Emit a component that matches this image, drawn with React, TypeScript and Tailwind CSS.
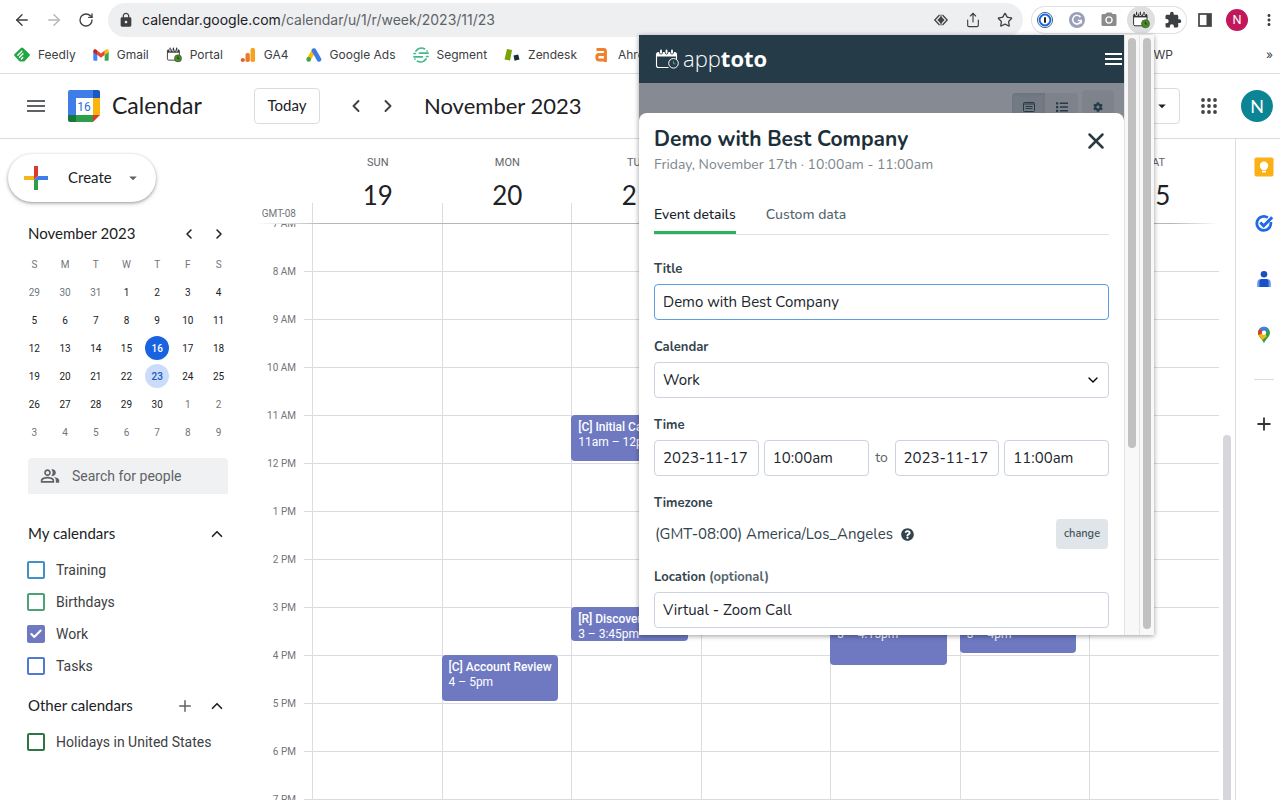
import React, { useState } from "react";
import {
  ArrowLeft,
  ArrowRight,
  Check,
  ChevronDown,
  ChevronLeft,
  ChevronRight,
  ChevronUp,
  Plus,
  RotateCw,
  Share,
  Star,
  X,
} from "lucide-react";
import { FaCog, FaList, FaQuestionCircle } from "react-icons/fa";
import {
  MdArrowDropDown,
  MdCameraAlt,
  MdExtension,
  MdLock,
  MdMenu,
  MdMoreVert,
  MdOutlinePeopleAlt,
} from "react-icons/md";

/* ---------- Icons ---------- */

function FeedlyIcon() {
  return (
    <svg viewBox="0 0 16 16" className="size-4">
      <path d="M6.900 1a1.600 1.600 0 0 1 2.200 0l6.300 6.100a1.400 1.400 0 0 1 0 2L10.800 14a2 2 0 0 1-1.400.6H6.600a2 2 0 0 1-1.400-.6L.600 9.100a1.400 1.400 0 0 1 0-2z" fill="#23a544" />
      <path d="M3.800 8.300 7.800 4.300M5.500 10.300 9 6.800M7.300 12l1.500-1.500" stroke="#fff" strokeWidth="1.300" strokeLinecap="round" />
    </svg>
  );
}

function GmailIcon() {
  return (
    <svg viewBox="0 0 16 16" className="size-4">
      <path d="M.3 4.500 4.300 7.200v6.600H1.500A1.200 1.200 0 0 1 .3 12.600z" fill="#4285f4" />
      <path d="M15.700 4.500 11.700 7.200v6.600h2.800a1.200 1.200 0 0 0 1.200-1.200z" fill="#34a853" />
      <path d="M4.200 3.500 8 6.400l3.800-2.900v4.300L8 10.800 4.200 7.800z" fill="#ea4335" />
      <path d="M11.700 3.500 13 2.600c1.200-.8 2.700-.1 2.700 1.200v1.400L11.700 8z" fill="#fbbc04" />
      <path d="M4.300 3.500 3 2.600C1.800 1.800.3 2.500.3 3.800v1.400L4.300 8z" fill="#c5221f" />
    </svg>
  );
}

function CalendarClockIcon() {
  return (
    <svg viewBox="0 0 18 18" className="size-[18px]">
      <rect x="1.600" y="3.200" width="13.400" height="11.600" rx="1.500" fill="#fff" stroke="#333" strokeWidth="1" />
      <path d="M1.600 3.200h13.400v3.200H1.600z" fill="#333" />
      <path d="M4.600 1.200v2.400M8.300 1.200v2.400M12 1.200v2.400" stroke="#fff" strokeWidth="2.800" strokeLinecap="round" />
      <path d="M4.600 1.200v2.400M8.300 1.200v2.400M12 1.200v2.400" stroke="#333" strokeWidth="1.400" strokeLinecap="round" />
      <circle cx="13.500" cy="12.800" r="4" fill="#4b8a2a" stroke="#355c20" strokeWidth=".7" />
      <path d="M13.300 10.600V13h1.800" stroke="#23361a" strokeWidth="1" fill="none" />
    </svg>
  );
}

function AnalyticsIcon() {
  return (
    <svg viewBox="0 0 16 16" className="size-4">
      <rect x="10.500" y="1" width="4.500" height="14" rx="1.700" fill="#f9a11b" />
      <rect x="5.500" y="6" width="4.300" height="9" rx="1.700" fill="#e9792b" />
      <circle cx="2.800" cy="13" r="2.100" fill="#e2602c" />
    </svg>
  );
}

function AdsIcon() {
  return (
    <svg viewBox="0 0 16 16" className="size-4">
      <path d="M7.800 3.600 2.800 12.200" stroke="#fbbc04" strokeWidth="4.200" strokeLinecap="round" />
      <path d="m8 3.600 5 8.800" stroke="#3f7be6" strokeWidth="4.600" strokeLinecap="round" />
      <circle cx="2.700" cy="12.400" r="2.300" fill="#34a853" />
    </svg>
  );
}

function SegmentIcon() {
  return (
    <svg viewBox="0 0 16 16" className="size-4" fill="none" stroke="#43b98b" strokeWidth="1.700" strokeLinecap="round">
      <path d="M3 4A6.800 6.800 0 0 1 11.500 1.800M13 12A6.800 6.800 0 0 1 4.500 14.200M6.500 6.200h8.500M1 9.800h8.500" />
      <path d="M14 4h.1M1.900 12h.1M1 6.500h1.500M13.500 9.500H15" />
    </svg>
  );
}

function ZendeskIcon() {
  return (
    <svg viewBox="0 0 16 16" className="size-4">
      <path d="m3 2 5 1-2 10.500-5.500-1z" fill="#78a300" />
      <path d="m9.500 8.500 4.700-1 1.300 5-5 1.300z" fill="#17313c" />
    </svg>
  );
}

function AhrefsIcon() {
  return (
    <svg viewBox="0 0 16 16" className="size-4" fill="none" stroke="#f0802c" strokeWidth="3">
      <path d="M2.500 2.600h7.300c1 0 1.600.6 1.600 1.600v10.800M11.400 7.600H5.200c-1.600 0-2.400.8-2.400 2.700s.8 2.700 2.400 2.700h6.200" />
    </svg>
  );
}

function GoogleCalendarLogo() {
  return (
    <svg viewBox="0 0 32 32" className="size-8" aria-hidden="true">
      <path d="M2 0h23v8H8v17H0V2a2 2 0 0 1 2-2z" fill="#3f7de8" />
      <path d="M25 0h5a2 2 0 0 1 2 2v6h-7z" fill="#1a56c4" />
      <path d="M25 8h7v17h-7z" fill="#fbb40b" />
      <path d="M0 25h8v7H2a2 2 0 0 1-2-2z" fill="#17763a" />
      <path d="M8 25h17v7H8z" fill="#2f9e4b" />
      <path d="M25 25h7l-7 7z" fill="#e2382c" />
      <path d="M8 8h17v17H8z" fill="#fff" />
      <text x="16" y="20.500" textAnchor="middle" fontSize="12" fill="#2b6be0" className="font-[Roboto]">
        16
      </text>
    </svg>
  );
}

function CreatePlus() {
  return (
    <svg viewBox="0 0 24 24" className="size-6">
      <path d="M10 0h4v10l-4 4z" fill="#dd3a2e" />
      <path d="M0 10h10v4H0z" fill="#f7b51c" />
      <path d="M14 10h10v4H10z" fill="#3f7de8" />
      <path d="M10 14h4v10h-4z" fill="#2f9e4b" />
    </svg>
  );
}

function EyeDiamond() {
  return (
    <svg viewBox="0 0 16 16" className="size-4" fill="none" stroke="#444" strokeWidth="1.300">
      <path d="M6.500 3 1.800 8l4.700 5M9.500 3l4.700 5-4.700 5" />
      <path d="M8 4.200 11.600 8 8 11.800 4.400 8z" fill="#444" stroke="none" />
      <path d="M8 2.500v11" strokeWidth="1" />
    </svg>
  );
}

function OnePasswordIcon() {
  return (
    <svg viewBox="0 0 18 18" className="size-[18px]">
      <circle cx="9" cy="9" r="7.600" fill="#fff" stroke="#27415f" strokeWidth=".8" />
      <circle cx="9" cy="9" r="5.400" fill="#fff" stroke="#1a6ae0" strokeWidth="2" />
      <path d="M9 6.200v5.600" stroke="#222" strokeWidth="2" />
    </svg>
  );
}

function GrammarlyIcon() {
  return (
    <svg viewBox="0 0 18 18" className="size-[18px]">
      <circle cx="9" cy="9" r="8" fill="#9ba0b9" />
      <path d="M12.500 6.200A4.300 4.300 0 1 0 13.200 9.500H9.800M13.200 9.500v3" fill="none" stroke="#fff" strokeWidth="1.500" />
    </svg>
  );
}

function SidePanelIcon() {
  return (
    <svg viewBox="0 0 16 16" className="size-4">
      <rect x="2" y="2" width="12" height="12" fill="none" stroke="#444" strokeWidth="1.700" />
      <path d="M9.500 2H14v12H9.500z" fill="#444" />
    </svg>
  );
}

function AppsIcon() {
  const spots = [3, 9, 15];
  return (
    <svg viewBox="0 0 18 18" className="size-[18px]" fill="#444">
      {spots.map((y) => spots.map((x) => <circle key={`${x}-${y}`} cx={x} cy={y} r="1.900" />))}
    </svg>
  );
}

function ApptotoLogo() {
  return (
    <svg viewBox="0 0 24 20" className="h-5 w-6" fill="none" stroke="#fff">
      <path d="M13.500 18.500H3.500a2 2 0 0 1-2-2v-11a2 2 0 0 1 2-2h16a2 2 0 0 1 2 2V11" strokeWidth="1.100" />
      <path d="M1.500 7.500v-2a2 2 0 0 1 2-2h16a2 2 0 0 1 2 2v2z" fill="#fff" stroke="none" />
      <path d="M6 1.500v2.200M11.500 1.500v2.200M17 1.500v2.200" stroke="#263b48" strokeWidth="3.600" strokeLinecap="round" />
      <path d="M6 1.500v2.200M11.500 1.500v2.200M17 1.500v2.200" strokeWidth="1.900" strokeLinecap="round" />
      <circle cx="18.500" cy="14.300" r="4.800" fill="#263b48" strokeWidth="1" />
      <path d="M18.500 11.800v3h2" stroke="#4fa37a" strokeWidth="1" />
    </svg>
  );
}

function KeepIcon() {
  return (
    <svg viewBox="0 0 20 20" className="size-5">
      <rect x=".5" y=".5" width="19" height="19" rx="1.800" fill="#fbb016" />
      <circle cx="10" cy="8.700" r="4.200" fill="#fff" />
      <path d="M8 11h4v2.200H8zM8 14h4v1.500H8z" fill="#fff" />
    </svg>
  );
}

function TasksIcon() {
  return (
    <svg viewBox="0 0 20 20" className="size-5" fill="none" stroke="#1f6be6">
      <path d="M13.800 4.600A7 7 0 1 0 16.700 9" strokeWidth="2.800" />
      <path d="m6.300 9.500 3.400 3.300 8.500-8.500" strokeWidth="3" />
    </svg>
  );
}

function ContactsIcon() {
  return (
    <svg viewBox="0 0 20 20" className="size-5">
      <circle cx="10" cy="5.200" r="3.300" fill="#1a4fc0" />
      <path d="M3.200 14a4 4 0 0 1 4-4h5.600a4 4 0 0 1 4 4v4H3.200z" fill="#6f93f0" />
      <path d="M5.500 12.500a2.500 2.500 0 0 1 2.500-2.500h4a2.500 2.500 0 0 1 2.500 2.500V18h-9z" fill="#1650c8" />
    </svg>
  );
}

function MapsIcon() {
  return (
    <svg viewBox="0 0 20 20" className="size-5">
      <path d="M10 1.800a6 6 0 0 1 6 6c0 4.200-4.300 6-6 10.700C8.300 13.800 4 12 4 7.800a6 6 0 0 1 6-6z" fill="#2f9e4b" />
      <path d="M4.400 9.800 10 7.800l3 3.500L8.500 15C7.300 13 5.200 11.800 4.400 9.800z" fill="#fbb40b" />
      <path d="M5.600 3.800 10 7.800 4.500 10C3.700 7.600 4.200 5.300 5.600 3.800z" fill="#e2382c" />
      <path d="M5.600 3.800A6 6 0 0 1 14.500 3.900L10 7.800z" fill="#3f7de8" />
      <circle cx="10" cy="7.800" r="2.200" fill="#fff" />
    </svg>
  );
}

/* ---------- Browser chrome ---------- */

const bookmarks = [
  { label: "Feedly", icon: <FeedlyIcon /> },
  { label: "Gmail", icon: <GmailIcon /> },
  { label: "Portal", icon: <CalendarClockIcon /> },
  { label: "GA4", icon: <AnalyticsIcon /> },
  { label: "Google Ads", icon: <AdsIcon /> },
  { label: "Segment", icon: <SegmentIcon /> },
  { label: "Zendesk", icon: <ZendeskIcon /> },
  { label: "Ahrefs", icon: <AhrefsIcon /> },
];

const toolButton = "flex w-8 items-center justify-center";
const extButton = "flex size-7 items-center justify-center rounded-full";

function BrowserBar() {
  return (
    <div className="shrink-0 font-[Inter,sans-serif] text-[#3c4043]">
      <div className="flex h-10 items-center pl-1.5">
        <button aria-label="Back" className={toolButton}>
          <ArrowLeft className="size-[18px]" strokeWidth={1.800} />
        </button>
        <button aria-label="Forward" className={`${toolButton} text-[#b4b6b9]`}>
          <ArrowRight className="size-[18px]" strokeWidth={1.800} />
        </button>
        <button aria-label="Reload" className={toolButton}>
          <RotateCw className="size-4" strokeWidth={2} />
        </button>
        <div className="mx-2 ml-1.5 flex h-[34px] flex-1 items-center rounded-full bg-[#eeeff1] pl-2.5 pr-0.5">
          <MdLock className="size-4" />
          <span className="ml-2 flex-1 text-sm text-[#5f6368]">
            <span className="text-[#202124]">calendar.google.com</span>/calendar/u/1/r/week/2023/11/23
          </span>
          <button aria-label="Preview" className={toolButton}>
            <EyeDiamond />
          </button>
          <button aria-label="Share" className={toolButton}>
            <Share className="size-4" strokeWidth={1.700} />
          </button>
          <button aria-label="Bookmark" className={toolButton}>
            <Star className="size-4" strokeWidth={1.900} />
          </button>
        </div>
        <div className="flex gap-1 rounded-full ring-1 ring-inset ring-[#dfe0e2]">
          <button aria-label="Passwords" className={extButton}>
            <OnePasswordIcon />
          </button>
          <button aria-label="Writing assistant" className={extButton}>
            <GrammarlyIcon />
          </button>
          <button aria-label="Capture" className={`${extButton} text-[#8b8b8b]`}>
            <MdCameraAlt className="size-[18px]" />
          </button>
          <button aria-label="Apptoto" className={`${extButton} bg-[#dedfe1]`}>
            <CalendarClockIcon />
          </button>
          <button aria-label="Extensions" className={extButton}>
            <MdExtension className="size-[18px]" />
          </button>
        </div>
        <button aria-label="Side panel" className={`${toolButton} ml-0.5`}>
          <SidePanelIcon />
        </button>
        <button aria-label="Profile" className={toolButton}>
          <span className="flex size-[22px] items-center justify-center rounded-full bg-[#c2185b] text-xs text-white">N</span>
        </button>
        <button aria-label="More" className="flex w-[27px] items-center justify-end pr-0.5">
          <MdMoreVert className="size-[18px]" />
        </button>
      </div>
      <nav className="flex h-[34px] items-center justify-between border-b border-[#dcdde0] pb-1 text-xs">
        <ul className="flex items-center gap-[17px] pl-3.5">
          {bookmarks.map((b) => (
            <li key={b.label}>
              <a href="#" className="flex items-center gap-2">
                <span className="flex w-4 justify-center">{b.icon}</span>
                {b.label}
              </a>
            </li>
          ))}
        </ul>
        <div className="flex items-center pr-[7px]">
          <a href="#">WP</a>
          <button aria-label="More bookmarks" className="flex w-[100px] justify-end">
            »
          </button>
        </div>
      </nav>
    </div>
  );
}

/* ---------- Calendar header ---------- */

function CalendarHeader() {
  return (
    <header className="flex h-[65px] shrink-0 items-center border-b border-[#dadce0] font-[Lato,sans-serif] text-[#202124]">
      <button aria-label="Main menu" className="ml-6 text-[#5f6368]">
        <MdMenu className="size-6" />
      </button>
      <a href="#" className="ml-5 flex w-[186px] items-center gap-3 text-[23px]">
        <GoogleCalendarLogo />
        <span className="pb-0.5">Calendar</span>
      </a>
      <button className="h-9 w-[66px] rounded border border-[#dadce0] pb-0.5 text-[15px]">Today</button>
      <button aria-label="Previous week" className="ml-5 flex w-8 justify-center text-[#3c4043]">
        <ChevronLeft className="size-5" strokeWidth={2.300} />
      </button>
      <button aria-label="Next week" className="flex w-8 justify-center text-[#3c4043]">
        <ChevronRight className="size-5" strokeWidth={2.300} />
      </button>
      <h1 className="ml-5 flex-1 pb-0.5 text-[22px]">November 2023</h1>
      <button aria-label="View" className="flex h-9 w-[91px] items-center justify-between rounded border border-[#dadce0] pl-3 pr-2 text-sm">
        Week
        <MdArrowDropDown className="size-[18px]" />
      </button>
      <button aria-label="Google apps" className="ml-5">
        <AppsIcon />
      </button>
      <button aria-label="Account" className="ml-[23px] mr-[7px] flex size-8 items-center justify-center rounded-full bg-[#0b8494] text-lg text-white">
        N
      </button>
    </header>
  );
}

/* ---------- Sidebar ---------- */

const weekdays = ["S", "M", "T", "W", "T", "F", "S"];
const weeks = [
  [29, 30, 31, 1, 2, 3, 4],
  [5, 6, 7, 8, 9, 10, 11],
  [12, 13, 14, 15, 16, 17, 18],
  [19, 20, 21, 22, 23, 24, 25],
  [26, 27, 28, 29, 30, 1, 2],
  [3, 4, 5, 6, 7, 8, 9],
];

function dayStyle(week: number, day: number) {
  const outside = (week === 0 && day > 20) || (week > 3 && day < 20);
  if (outside) return "text-[#70757a]";
  if (day === 16) return "bg-[#1a63e0] font-medium text-white";
  if (day === 23) return "bg-[#cbdcfa] font-medium text-[#1b57ba]";
  return "text-[#202124]";
}

function MiniMonth() {
  return (
    <section className="mt-4">
      <div className="flex h-8 items-center pl-7 pr-[22px]">
        <h2 className="flex-1 pb-0.5 font-[Lato,sans-serif] text-[15px]">November 2023</h2>
        <button aria-label="Previous month" className="flex w-[30px] justify-center">
          <ChevronLeft className="size-4" strokeWidth={2.300} />
        </button>
        <button aria-label="Next month" className="flex w-[30px] justify-center">
          <ChevronRight className="size-4" strokeWidth={2.300} />
        </button>
      </div>
      <table className="ml-[19px] w-[215px] table-fixed text-center text-[10px]">
        <thead>
          <tr className="h-7 text-[#70757a]">
            {weekdays.map((d, i) => (
              <th key={i} className="p-0 font-normal">
                {d}
              </th>
            ))}
          </tr>
        </thead>
        <tbody>
          {weeks.map((w, wi) => (
            <tr key={wi} className="h-7">
              {w.map((d) => (
                <td key={d} className="p-0">
                  <button className={`size-6 rounded-full ${dayStyle(wi, d)}`}>{d}</button>
                </td>
              ))}
            </tr>
          ))}
        </tbody>
      </table>
    </section>
  );
}

function CalendarCheck({ label, color, on }: { label: string; color: string; on?: boolean }) {
  return (
    <label className="flex h-8 items-center gap-[11px] pl-[27px] text-sm text-[#3c4043]">
      <span className="relative flex size-[18px]">
        <input type="checkbox" defaultChecked={on} className={`peer size-[18px] appearance-none rounded-xs border-2 ${color}`} />
        <Check className="pointer-events-none absolute inset-0.5 hidden size-3.5 text-white peer-checked:block" strokeWidth={3.500} />
      </span>
      {label}
    </label>
  );
}

function Sidebar() {
  return (
    <aside className="w-64 shrink-0 font-[Roboto,sans-serif] text-[#202124]">
      <button className="ml-2 mt-[15px] flex h-12 w-[148px] items-center rounded-full bg-white pl-4 font-[Lato,sans-serif] text-[15px] shadow-[0_1px_3px_rgba(60,64,67,0.45),0_2px_5px_rgba(60,64,67,0.15)]">
        <CreatePlus />
        <span className="ml-5 flex-1 pb-0.5 text-left">Create</span>
        <MdArrowDropDown className="mr-3.5 size-[18px] text-[#5f6368]" />
      </button>
      <MiniMonth />
      <label className="ml-7 mt-3 flex h-9 w-[200px] items-center gap-3 rounded-t bg-[#eff1f3] pl-3 text-[#5f6368]">
        <MdOutlinePeopleAlt className="size-5" />
        <input type="search" aria-label="Search for people" placeholder="Search for people" className="w-36 bg-transparent text-sm outline-none placeholder:text-[#5f6368]" />
      </label>
      <div className="mt-5 flex h-10 items-center justify-between pl-7 pr-[30px] font-[Lato,sans-serif] text-[15px]">
        <h2 className="pb-0.5">My calendars</h2>
        <button aria-label="Collapse my calendars">
          <ChevronUp className="size-[18px]" strokeWidth={2.200} />
        </button>
      </div>
      <CalendarCheck label="Training" color="border-[#4290c8] checked:bg-[#4290c8]" />
      <CalendarCheck label="Birthdays" color="border-[#4aa275] checked:bg-[#4aa275]" />
      <CalendarCheck label="Work" color="border-[#6e79c2] checked:bg-[#6e79c2]" on />
      <CalendarCheck label="Tasks" color="border-[#5079cf] checked:bg-[#5079cf]" />
      <div className="flex h-11 items-center gap-3.5 pl-7 pr-[30px] pt-1 font-[Lato,sans-serif] text-[15px]">
        <h2 className="flex-1 pb-0.5">Other calendars</h2>
        <button aria-label="Add other calendars">
          <Plus className="size-[18px] text-[#5f6368]" strokeWidth={2} />
        </button>
        <button aria-label="Collapse other calendars">
          <ChevronUp className="size-[18px]" strokeWidth={2.200} />
        </button>
      </div>
      <CalendarCheck label="Holidays in United States" color="border-[#2f7547] checked:bg-[#2f7547]" />
    </aside>
  );
}

/* ---------- Week grid ---------- */

const HOUR = 48;
const FIRST_HOUR = 7;

type CalEvent = { title: string; time: string; start: number; length: number };
const days: { name: string; date: number; events: CalEvent[] }[] = [
  { name: "SUN", date: 19, events: [] },
  { name: "MON", date: 20, events: [{ title: "[C] Account Review", time: "4 – 5pm", start: 16, length: 1 }] },
  {
    name: "TUE",
    date: 21,
    events: [
      { title: "[C] Initial Call", time: "11am – 12pm", start: 11, length: 1 },
      { title: "[R] Discovery", time: "3 – 3:45pm", start: 15, length: 0.75 },
    ],
  },
  { name: "WED", date: 22, events: [] },
  { name: "THU", date: 23, events: [{ title: "[C] Demo", time: "3 – 4:15pm", start: 15, length: 1.25 }] },
  { name: "FRI", date: 24, events: [{ title: "[C] Demo", time: "3 – 4pm", start: 15, length: 1 }] },
  { name: "SAT", date: 25, events: [] },
];
const hours = ["7 AM", "8 AM", "9 AM", "10 AM", "11 AM", "12 PM", "1 PM", "2 PM", "3 PM", "4 PM", "5 PM", "6 PM", "7 PM"];

function WeekView() {
  return (
    <main className="flex min-w-0 flex-1 flex-col font-[Roboto,sans-serif]">
      <div className="flex h-[84px] shrink-0 pr-4">
        <div className="flex w-12 items-end justify-end pb-0.5 pr-2 text-[10px] text-[#70757a]">GMT-08</div>
        <div className="w-2" />
        <div className="grid flex-1 grid-cols-7">
          {days.map((d) => (
            <div key={d.name} className="flex flex-col text-center">
              <div className="pt-4 pl-0.5 text-[11px] leading-4 text-[#5f6368]">{d.name}</div>
              <div className="-mb-1.5 mt-auto pl-0.5 font-[Lato,sans-serif] text-[26px] leading-7 text-[#202124]">{d.date}</div>
              <div className="h-5 border-l border-[#dadce0]" />
            </div>
          ))}
        </div>
      </div>
      <div className="mr-4 h-px shrink-0 bg-[linear-gradient(to_right,transparent,#b4b6ba_7%,#b4b6ba_95%,transparent)]" />
      <div className="flex min-h-0 flex-1 overflow-hidden">
        <div className="-mt-[25px] w-12 pr-2 text-right text-[10px] text-[#70757a]">
          {hours.map((h) => (
            <div key={h} className="flex h-12 items-center justify-end">
              {h}
            </div>
          ))}
        </div>
        <div className="w-2">
          {hours.map((h) => (
            <div key={h} className="h-12 border-b border-[#dadce0]" />
          ))}
        </div>
        <div className="grid flex-1 grid-cols-7">
          {days.map((d) => (
            <div key={d.name} className="relative border-l border-[#dadce0]">
              {hours.map((h) => (
                <div key={h} className="h-12 border-b border-[#dadce0]" />
              ))}
              {d.events.map((e) => (
                <button
                  key={e.title}
                  className="absolute -left-px right-[13px] flex flex-col overflow-hidden rounded bg-[#6e79c2] pl-[7px] pt-[5px] text-left text-xs leading-[15px] text-white"
                  style={{ top: (e.start - FIRST_HOUR) * HOUR - 1, height: e.length * HOUR - 2 }}
                >
                  <span className="whitespace-nowrap font-medium">{e.title}</span>
                  <span className="whitespace-nowrap">{e.time}</span>
                </button>
              ))}
            </div>
          ))}
        </div>
        <div className="flex w-4 flex-col items-center">
          <div className="mt-[211px] w-2 flex-1 rounded-t-full bg-[#d5d7dc]" />
        </div>
      </div>
    </main>
  );
}

function AppRail() {
  return (
    <aside className="flex w-[45px] shrink-0 flex-col items-center gap-9 border-l border-[#dadce0] pl-3 pt-[18px]">
      <button aria-label="Keep">
        <KeepIcon />
      </button>
      <button aria-label="Tasks">
        <TasksIcon />
      </button>
      <button aria-label="Contacts">
        <ContactsIcon />
      </button>
      <button aria-label="Maps">
        <MapsIcon />
      </button>
      <hr className="-mt-0.5 w-5 border-[#dadce0]" />
      <button aria-label="Get add-ons" className="-mt-0.5">
        <Plus className="size-5 text-[#333]" strokeWidth={2.200} />
      </button>
    </aside>
  );
}

/* ---------- Extension popup ---------- */

const fieldBox = "h-9 w-full min-w-0 rounded border bg-white px-2 text-[15px] text-[#1c262c] outline-none";
const idle = "border-[#cdd2e0]";
const active = "border-[#5a9fe0]";
const fieldLabel = "block h-5 text-[13px] leading-5 font-bold text-[#33434c]";

function Scrollbar({ part }: { part: string }) {
  return (
    <div className="flex w-[15px] shrink-0 flex-col items-center border-l border-[#e4e4e4] bg-[#f8f8f8] pb-1.5 pt-[3px]">
      <div className={`w-2 rounded-full bg-[#c1c1c1] ${part}`} />
    </div>
  );
}

function EventForm() {
  const [tab, setTab] = useState("details");
  return (
    <section className="flex-1 rounded-t-lg bg-white px-[15px] pt-3">
      <div className="flex items-start justify-between">
        <div>
          <h2 className="text-[21px] leading-7 font-bold text-[#1c2f3a]">Demo with Best Company</h2>
          <p className="text-sm leading-6 text-[#7d868b]">Friday, November 17th · 10:00am - 11:00am</p>
        </div>
        <button aria-label="Close" className="pt-[3px] text-[#2c3a42]">
          <X className="size-[26px]" strokeWidth={2.300} />
        </button>
      </div>
      <div role="tablist" className="mt-6 flex gap-[30px] border-b border-[#dde1e5] text-sm leading-7 font-medium">
        <button role="tab" aria-selected={tab === "details"} onClick={() => setTab("details")} className="border-b-3 border-[#2bb25b] pb-0.5 text-[#15232b]">
          Event details
        </button>
        <button role="tab" aria-selected={tab === "custom"} onClick={() => setTab("custom")} className="pb-[5px] text-[#55646d]">
          Custom data
        </button>
      </div>
      <form className="mt-6 flex flex-col gap-[17px]">
        <div className="flex flex-col gap-[5px]">
          <label htmlFor="title" className={fieldLabel}>
            Title
          </label>
          <input id="title" defaultValue="Demo with Best Company" className={`${fieldBox} ${active}`} />
        </div>
        <div className="flex flex-col gap-[5px]">
          <label htmlFor="calendar" className={fieldLabel}>
            Calendar
          </label>
          <div className="relative">
            <select id="calendar" className={`${fieldBox} ${idle} appearance-none`}>
              <option>Work</option>
            </select>
            <ChevronDown className="pointer-events-none absolute right-2 top-2.5 size-4" strokeWidth={2} />
          </div>
        </div>
        <div className="flex flex-col gap-[5px]">
          <label htmlFor="start-date" className={fieldLabel}>
            Time
          </label>
          <div className="flex items-center gap-[5px] text-[#55646d]">
            <input id="start-date" defaultValue="2023-11-17" className={`${fieldBox} ${idle}`} />
            <input aria-label="Start time" defaultValue="10:00am" className={`${fieldBox} ${idle}`} />
            <span className="w-4 shrink-0 text-center text-sm">to</span>
            <input aria-label="End date" defaultValue="2023-11-17" className={`${fieldBox} ${idle}`} />
            <input aria-label="End time" defaultValue="11:00am" className={`${fieldBox} ${idle}`} />
          </div>
        </div>
        <div className="flex flex-col gap-[5px]">
          <h3 className={fieldLabel}>Timezone</h3>
          <div className="flex h-8 items-center gap-2 px-px text-[15px] text-[#33434c]">
            (GMT-08:00) America/Los_Angeles
            <FaQuestionCircle className="size-[13px]" />
            <button type="button" className="ml-auto h-[30px] w-[52px] rounded bg-[#e0e5e9] text-[11px] font-semibold text-[#45545d]">
              change
            </button>
          </div>
        </div>
        <div className="flex flex-col gap-[5px]">
          <label htmlFor="location" className={fieldLabel}>
            Location <span className="text-[#55646d]">(optional)</span>
          </label>
          <input id="location" defaultValue="Virtual - Zoom Call" className={`${fieldBox} ${idle}`} />
        </div>
      </form>
    </section>
  );
}

function ExtensionPopup() {
  return (
    <div className="absolute right-[126px] top-[35px] flex h-[600px] w-[515px] overflow-hidden bg-white font-[Nunito,Lato,sans-serif] shadow-[0_1px_5px_rgba(0,0,0,0.4)]">
      <div className="flex min-w-0 flex-1 flex-col bg-[#868a93]">
        <header className="flex h-12 shrink-0 items-center bg-[#263b48] pl-4 text-white">
          <ApptotoLogo />
          <span className="ml-1 flex-1 pb-0.5 font-['Open_Sans',sans-serif] text-[22px] font-light">
            app<b className="font-bold">toto</b>
          </span>
          <button aria-label="Menu" className="mr-0.5 flex w-[17px] flex-col gap-[3px]">
            <span className="h-0.5 bg-white" />
            <span className="h-0.5 bg-white" />
            <span className="h-0.5 bg-white" />
          </button>
        </header>
        <div className="flex h-[30px] shrink-0 items-start justify-end gap-1 pr-2.5 text-[#263b48]">
          <div className="mt-2.5 flex h-5 rounded-t bg-[#7d828b]">
            <button aria-label="Card view" className="flex w-[33px] items-end justify-center rounded-tl bg-[#747a84] shadow-inner">
              <svg viewBox="0 0 12 10" className="mb-px h-2.5 w-3">
                <rect x=".5" y=".5" width="11" height="9" rx="1" fill="none" stroke="currentColor" />
                <path d="M1 2h10M2.500 4.500h7M2.500 6.500h7" stroke="currentColor" />
              </svg>
            </button>
            <button aria-label="List view" className="flex w-[33px] items-end justify-center">
              <FaList className="size-3" />
            </button>
          </div>
          <button aria-label="Settings" className="mt-[7px] flex h-[23px] w-8 items-end justify-center rounded-t bg-[#7d828b]">
            <FaCog className="mb-px size-2.5" />
          </button>
        </div>
        <EventForm />
      </div>
      <Scrollbar part="h-[410px]" />
      <Scrollbar part="flex-1" />
    </div>
  );
}

export default function App() {
  return (
    <div className="relative flex h-screen flex-col overflow-hidden bg-white">
      <BrowserBar />
      <CalendarHeader />
      <div className="flex min-h-0 flex-1">
        <Sidebar />
        <WeekView />
        <AppRail />
      </div>
      <ExtensionPopup />
    </div>
  );
}
